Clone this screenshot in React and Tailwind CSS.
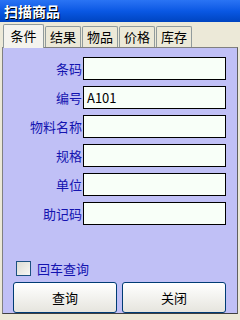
import React from "react";

const font = { fontFamily: '"Noto Sans CJK SC", "Noto Sans", sans-serif' };

function Row({ label, value }) {
  return (
    <div className="flex items-center h-[23px]">
      <div className="w-[80px] text-right text-[13px] leading-none text-[#1414b0] pr-[1px]">{label}</div>
      <div className="w-[143px] h-[23px] border border-black bg-[#f8fff8] flex items-center px-[3px] text-[13px] leading-none text-black">
        {value}
      </div>
    </div>
  );
}

export default function App() {
  const tabs = ["结果", "物品", "价格", "库存"];
  return (
    <div className="w-[240px] h-[320px] bg-[#ece9d8] flex flex-col overflow-hidden" style={font}>
      <div className="h-[22px] bg-gradient-to-b from-[#2a74f4] via-[#0a58e4] to-[#0044c0] flex items-center pl-[4px]">
        <span className="text-white font-bold text-[14px] leading-none [text-shadow:1px_1px_0_#000]">扫描商品</span>
      </div>
      <div className="h-[25px] flex items-end pl-[3px] relative z-10">
        <div className="h-[24px] w-[41px] bg-[#f4f3ee] border-t border-l border-r border-[#919b9c] rounded-t-[2px] flex items-center justify-center text-[13px] text-black -mb-[1px] pb-[1px]">
          条件
        </div>
        {tabs.map((t) => (
          <div
            key={t}
            className="h-[21px] w-[36px] ml-[1px] bg-[#ece9d8] border-t border-l border-r border-[#919b9c] rounded-t-[2px] flex items-center justify-center text-[13px] text-black"
          >
            {t}
          </div>
        ))}
      </div>
      <div className="mx-[2px] h-[267px] bg-[#c0c0f6] border border-[#808080] border-r-[#606060] border-b-[#404040] flex flex-col pt-[9px]">
        <div className="flex flex-col gap-[6px]">
          <Row label="条码" value="" />
          <Row label="编号" value="A101" />
          <Row label="物料名称" value="" />
          <Row label="规格" value="" />
          <Row label="单位" value="" />
          <Row label="助记码" value="" />
        </div>
        <div className="mt-[36px] flex items-center pl-[13px] h-[15px]">
          <div className="w-[15px] h-[15px] border border-[#1c5180] bg-gradient-to-br from-[#dcdcd4] to-[#f8f8f4]" />
          <span className="ml-[6px] text-[13px] leading-none text-[#1414b0]">回车查询</span>
        </div>
        <div className="mt-[6px] flex pl-[10px] gap-[5px]">
          <div className="w-[104px] h-[31px] rounded-[3px] border border-[#003c74] bg-gradient-to-b from-white to-[#e6e5de] flex items-center justify-center text-[13px] text-black">
            查询
          </div>
          <div className="w-[104px] h-[31px] rounded-[3px] border border-[#003c74] bg-gradient-to-b from-white to-[#e6e5de] flex items-center justify-center text-[13px] text-black">
            关闭
          </div>
        </div>
      </div>
    </div>
  );
}
